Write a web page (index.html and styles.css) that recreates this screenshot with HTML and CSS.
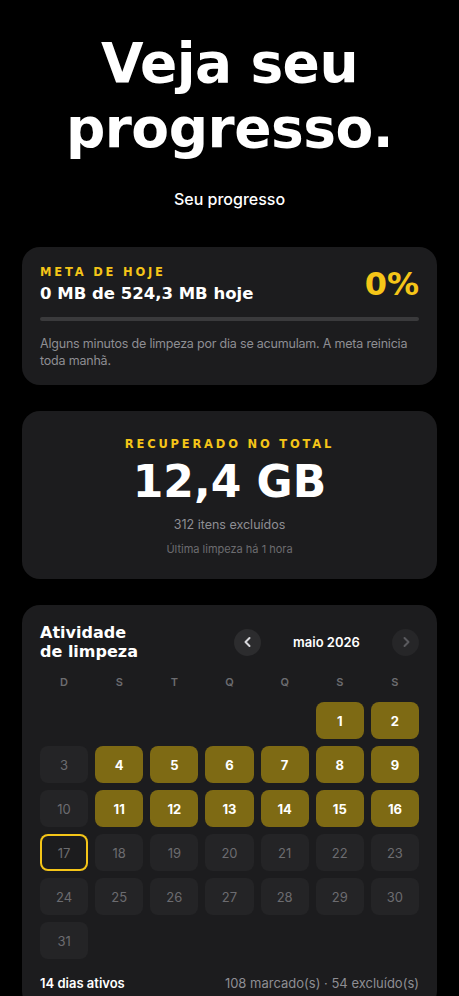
FILE: index.html
```html
<!DOCTYPE html>
<html lang="pt-BR">
<head>
  <meta charset="UTF-8">
  <meta name="viewport" content="width=device-width, initial-scale=1.0">
  <title>Veja seu progresso</title>
  <link rel="stylesheet" href="styles.css">
</head>
<body>
  <div class="page">
    <h1 class="hero">Veja seu<br>progresso.</h1>
    <p class="subtitle">Seu progresso</p>

    <section class="card goal">
      <div class="goal-top">
        <div>
          <div class="eyebrow">META DE HOJE</div>
          <div class="goal-amount">0 MB de 524,3 MB hoje</div>
        </div>
        <div class="goal-pct">0%</div>
      </div>
      <div class="bar"><div class="bar-fill" style="width: 0%"></div></div>
      <p class="goal-note">Alguns minutos de limpeza por dia se acumulam. A meta reinicia toda manhã.</p>
    </section>

    <section class="card total">
      <div class="eyebrow">RECUPERADO NO TOTAL</div>
      <div class="total-value">12,4 GB</div>
      <div class="total-items">312 itens excluídos</div>
      <div class="total-last">Última limpeza há 1 hora</div>
    </section>

    <section class="card activity">
      <div class="activity-head">
        <h2>Atividade<br>de limpeza</h2>
        <div class="month-nav">
          <button class="nav-btn" aria-label="Mês anterior">
            <svg width="12" height="12" viewBox="0 0 12 12"><path d="M7.5 2 L3.5 6 L7.5 10" fill="none" stroke="currentColor" stroke-width="2" stroke-linecap="round" stroke-linejoin="round"/></svg>
          </button>
          <span class="month">maio 2026</span>
          <button class="nav-btn disabled" aria-label="Próximo mês">
            <svg width="12" height="12" viewBox="0 0 12 12"><path d="M4.5 2 L8.5 6 L4.5 10" fill="none" stroke="currentColor" stroke-width="2" stroke-linecap="round" stroke-linejoin="round"/></svg>
          </button>
        </div>
      </div>

      <div class="weekdays">
        <span>D</span><span>S</span><span>T</span><span>Q</span><span>Q</span><span>S</span><span>S</span>
      </div>

      <div class="days">
        <span class="blank"></span><span class="blank"></span><span class="blank"></span><span class="blank"></span><span class="blank"></span>
        <span class="day on">1</span><span class="day on">2</span>
        <span class="day">3</span><span class="day on">4</span><span class="day on">5</span><span class="day on">6</span><span class="day on">7</span><span class="day on">8</span><span class="day on">9</span>
        <span class="day">10</span><span class="day on">11</span><span class="day on">12</span><span class="day on">13</span><span class="day on">14</span><span class="day on">15</span><span class="day on">16</span>
        <span class="day today">17</span><span class="day">18</span><span class="day">19</span><span class="day">20</span><span class="day">21</span><span class="day">22</span><span class="day">23</span>
        <span class="day">24</span><span class="day">25</span><span class="day">26</span><span class="day">27</span><span class="day">28</span><span class="day">29</span><span class="day">30</span>
        <span class="day">31</span>
      </div>

      <div class="activity-foot">
        <span class="active-days">14 dias ativos</span>
        <span class="counts">108 marcado(s) · 54 excluído(s)</span>
      </div>
    </section>
  </div>
</body>
</html>
```

FILE: styles.css
```css
body {
  margin: 0;
  background: #000000;
  color: #ffffff;
  font-family: 'Inter', 'Roboto', sans-serif;
}

.page {
  padding: 0 22px 40px;
}

.hero {
  margin: 31px 0 0;
  font-family: 'DejaVu Sans', sans-serif;
  font-weight: bold;
  font-size: 55px;
  line-height: 65px;
  letter-spacing: -0.5px;
  text-align: center;
}

.subtitle {
  margin: 28px 0 38px;
  font-size: 16px;
  font-weight: 500;
  text-align: center;
}

.card {
  background: #1c1c1e;
  border-radius: 18px;
  padding: 18px;
  margin-bottom: 26px;
}

.eyebrow {
  font-family: 'DejaVu Sans', sans-serif;
  font-weight: bold;
  font-size: 11.5px;
  letter-spacing: 2.8px;
  color: #f5c518;
}

.goal-top {
  display: flex;
  justify-content: space-between;
  align-items: center;
}

.goal-amount {
  margin-top: 5px;
  font-family: 'DejaVu Sans', sans-serif;
  font-weight: bold;
  font-size: 16.5px;
}

.goal-pct {
  font-family: 'DejaVu Sans', sans-serif;
  font-weight: bold;
  font-size: 32px;
  color: #f5c518;
}

.goal {
  padding-bottom: 14px;
}

.bar {
  height: 4px;
  margin-top: 14px;
  border-radius: 2px;
  background: #3a3a3c;
}

.bar-fill {
  height: 100%;
  border-radius: 2px;
  background: #f5c518;
}

.goal-note {
  margin: 14px 0 2px;
  font-size: 12.5px;
  line-height: 17px;
  letter-spacing: -0.2px;
  color: #8e8e93;
}

.total {
  padding: 26px 18px 23px;
  text-align: center;
}

.total-value {
  margin-top: 5px;
  font-family: 'DejaVu Sans', sans-serif;
  font-weight: bold;
  font-size: 44px;
  line-height: 52px;
}

.total-items {
  margin-top: 9px;
  font-size: 12.5px;
  color: #8e8e93;
}

.total-last {
  margin-top: 10px;
  font-size: 11px;
  color: #6c6c70;
}

.activity-head {
  display: flex;
  justify-content: space-between;
  align-items: center;
}

.activity-head h2 {
  margin: 0;
  font-family: 'DejaVu Sans', sans-serif;
  font-weight: bold;
  font-size: 16px;
  line-height: 19px;
}

.month-nav {
  display: flex;
  align-items: center;
}

.month {
  width: 131px;
  text-align: center;
  font-size: 13px;
  font-weight: 600;
}

.nav-btn {
  width: 27px;
  height: 27px;
  padding: 0;
  border: none;
  border-radius: 50%;
  background: #2c2c2e;
  color: #d8d8dc;
  display: flex;
  align-items: center;
  justify-content: center;
}

.nav-btn.disabled {
  background: #262628;
  color: #5a5a5e;
}

.weekdays {
  display: grid;
  grid-template-columns: repeat(7, 1fr);
  gap: 7px;
  margin-top: 14px;
  text-align: center;
  font-size: 11px;
  font-weight: 600;
  color: #6c6c70;
}

.days {
  display: grid;
  grid-template-columns: repeat(7, 1fr);
  gap: 7px;
  margin-top: 13px;
}

.day {
  height: 37px;
  border-radius: 8px;
  background: #242426;
  color: #6c6c70;
  font-size: 13px;
  display: flex;
  align-items: center;
  justify-content: center;
}

.day.on {
  background: #7e6a14;
  color: #ffffff;
  font-weight: bold;
}

.day.today {
  background: transparent;
  box-shadow: inset 0 0 0 2px #f5c518;
}

.activity-foot {
  display: flex;
  justify-content: space-between;
  margin-top: 16px;
  font-size: 13px;
}

.active-days {
  font-weight: 600;
}

.counts {
  color: #8e8e93;
}
```
